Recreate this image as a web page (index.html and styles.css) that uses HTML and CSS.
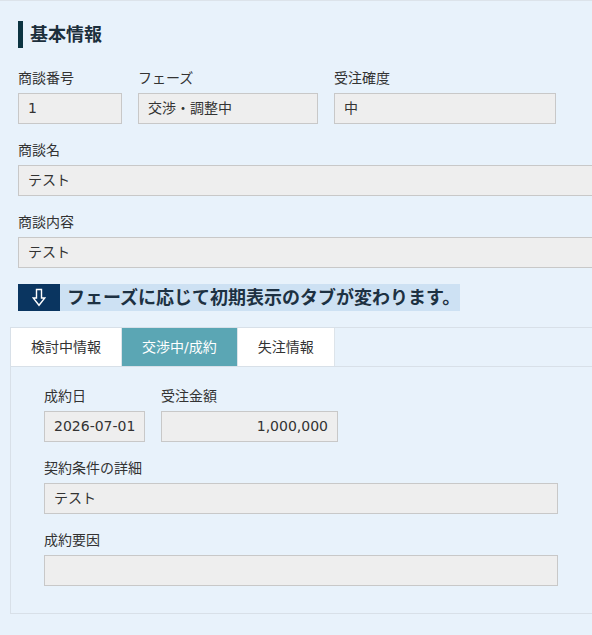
FILE: index.html
```html
<!DOCTYPE html>
<html lang="ja">
<head>
<meta charset="utf-8">
<link rel="stylesheet" href="styles.css">
</head>
<body>
<div class="page">
  <div class="section">
    <h2 class="heading">基本情報</h2>
    <div class="row">
      <div class="field w-no">
        <div class="label">商談番号</div>
        <div class="input">1</div>
      </div>
      <div class="field w-phase">
        <div class="label">フェーズ</div>
        <div class="input">交渉・調整中</div>
      </div>
      <div class="field w-prob">
        <div class="label">受注確度</div>
        <div class="input">中</div>
      </div>
    </div>
    <div class="field full">
      <div class="label">商談名</div>
      <div class="input">テスト</div>
    </div>
    <div class="field full">
      <div class="label">商談内容</div>
      <div class="input">テスト</div>
    </div>
    <div class="notice">
      <span class="notice-icon">
        <svg width="14" height="19" viewBox="0 0 14 19"><path d="M4.5 1.5 H9.5 V10 H12.8 L7 17.3 L1.2 10 H4.5 Z" fill="none" stroke="#fff" stroke-width="1.4" stroke-linejoin="miter"/></svg>
      </span>
      <span class="notice-text">フェーズに応じて初期表示のタブが変わります。</span>
    </div>
  </div>
  <div class="tabpanel">
    <div class="tabs">
      <div class="tab">検討中情報</div>
      <div class="tab active">交渉中/成約</div>
      <div class="tab">失注情報</div>
    </div>
    <div class="tabbody">
      <div class="row">
        <div class="field w-date">
          <div class="label">成約日</div>
          <div class="input">2026-07-01</div>
        </div>
        <div class="field w-amount">
          <div class="label">受注金額</div>
          <div class="input right">1,000,000</div>
        </div>
      </div>
      <div class="field inner-full">
        <div class="label">契約条件の詳細</div>
        <div class="input">テスト</div>
      </div>
      <div class="field inner-full">
        <div class="label">成約要因</div>
        <div class="input"></div>
      </div>
    </div>
  </div>
</div>
</body>
</html>
```

FILE: styles.css
```css
html, body {
  margin: 0;
  padding: 0;
}
body {
  background: #e8f2fb;
  border-top: 1px solid #dce3ea;
  font-family: "DejaVu Sans", "Noto Sans CJK JP", sans-serif;
  font-size: 14px;
  color: #333;
  overflow: hidden;
  height: 634px;
}
.page {
  padding-top: 20px;
  width: 700px;
}
.section {
  padding-left: 18px;
}
.heading {
  margin: 0 0 20px 0;
  height: 27px;
  line-height: 27px;
  border-left: 5px solid #0c3441;
  padding-left: 7px;
  font-size: 18px;
  font-weight: bold;
  color: #1c2f3c;
}
.row {
  display: flex;
  gap: 16px;
}
.field {
  margin-bottom: 16px;
}
.label {
  height: 20px;
  line-height: 20px;
  margin-bottom: 5px;
  color: #333;
}
.input {
  box-sizing: border-box;
  height: 31px;
  line-height: 29px;
  border: 1px solid #c8c8c8;
  background: #eeeeee;
  padding: 0 9px;
  color: #333;
  white-space: nowrap;
}
.input.right {
  text-align: right;
}
.w-no { width: 104px; }
.w-phase { width: 180px; }
.w-prob { width: 222px; }
.full { width: 620px; }
.w-date { width: 101px; }
.w-amount { width: 177px; }
.inner-full { width: 514px; }

.notice {
  display: inline-flex;
  height: 27px;
  background: #cde1f3;
  margin-bottom: 16px;
}
.notice-icon {
  width: 42px;
  background: #0a3560;
  display: flex;
  align-items: center;
  justify-content: center;
}
.notice-text {
  line-height: 27px;
  padding-left: 7px;
  font-size: 18px;
  font-weight: bold;
  color: #1d3142;
  white-space: nowrap;
}

.tabpanel {
  margin-left: 10px;
  border: 1px solid #d8e0e8;
  width: 660px;
}
.tabs {
  display: flex;
  border-bottom: 1px solid #d8e0e8;
}
.tab {
  height: 38px;
  line-height: 38px;
  padding: 0 20px;
  background: #fff;
  border-right: 1px solid #dde4ea;
  color: #333;
  white-space: nowrap;
}
.tab.active {
  background: #5ba6b4;
  color: #fff;
}
.tabbody {
  padding: 19px 0 11px 33px;
}
```
